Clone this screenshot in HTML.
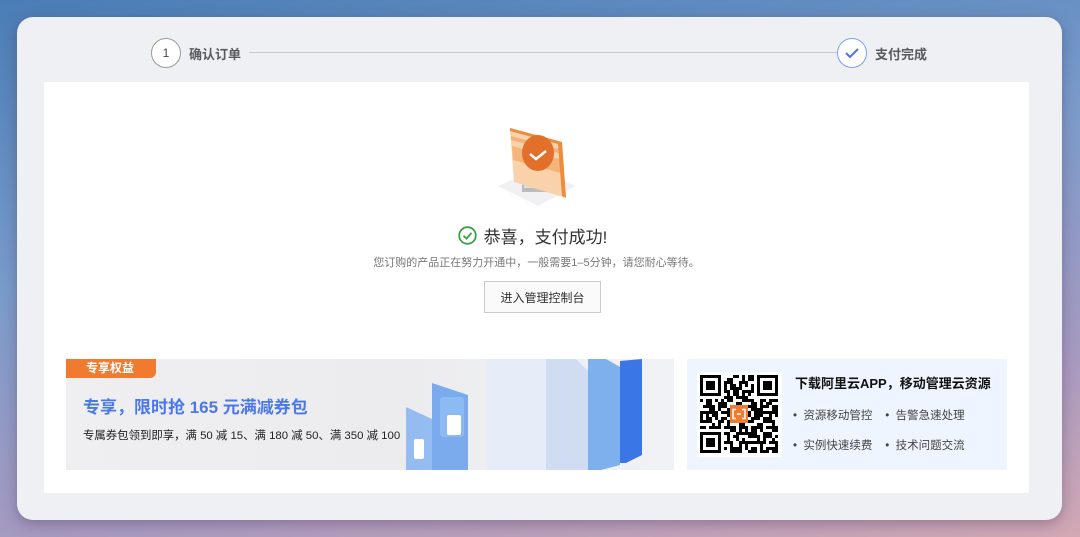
<!DOCTYPE html>
<html><head><meta charset="utf-8"><style>
*{margin:0;padding:0;box-sizing:border-box}
body{width:1080px;height:537px;overflow:hidden;font-family:"Liberation Sans","Noto Sans CJK SC",sans-serif;background:linear-gradient(170deg,#4a7db6 0%,#7a9bcb 40%,#a79ac0 75%,#d2a8b4 100%);position:relative}
.win{position:absolute;left:17px;top:17px;width:1045px;height:503px;background:#eff0f4;border-radius:16px;box-shadow:0 4px 14px rgba(60,40,80,.35)}
.main{position:absolute;left:27px;top:65px;width:985px;height:411px;background:#fff}
.step{position:absolute;top:21px;height:30px;display:flex;align-items:center;font-size:13px;font-weight:bold;color:#5a5a5a}
.circ{width:30px;height:30px;border-radius:50%;border:1px solid #999;background:#fff;display:flex;align-items:center;justify-content:center;font-size:12px;font-weight:normal;color:#444;margin-right:8px}
.line{position:absolute;left:232px;top:35px;width:588px;height:1px;background:#c8c8cc}
.t{position:absolute;text-align:center;width:100%}
.btn{position:absolute;left:440px;top:199px;width:117px;height:32px;border:1px solid #ccc;background:#fafafa;font-size:12px;color:#333;display:flex;align-items:center;justify-content:center}
.ban{position:absolute;left:22px;top:277px;width:608px;height:111px;background:linear-gradient(90deg,#efeff1 0%,#ececee 55%,#f1f2f6 100%);overflow:hidden}
.tag{position:absolute;left:0;top:0;width:90px;height:19px;background:#ef7a30;color:#fff;font-size:12px;font-weight:bold;padding-left:20px;line-height:19px;border-bottom-right-radius:6px}
.app{position:absolute;left:643px;top:277px;width:320px;height:111px;background:#eff5fe}
.li{position:absolute;font-size:11.5px;color:#444}
</style></head><body>
<div class="win">
 <div class="line"></div>
 <div class="step" style="left:134px"><div class="circ">1</div>确认订单</div>
 <div class="step" style="left:820px"><div class="circ" style="border-color:#7f9ef5;border-width:1.5px"><svg width="16" height="12" viewBox="0 0 16 12"><path d="M2 6 L6 10 L14 2" fill="none" stroke="#4f72e8" stroke-width="2"/></svg></div>支付完成</div>
 <div class="main">
  <svg style="position:absolute;left:450px;top:42px" width="85" height="88" viewBox="0 0 85 88">
   <path d="M4 62 L40 46 L82 62 L44 82Z" fill="#f1f1f3"/>
   <rect x="28" y="54" width="26" height="14" fill="#bbb"/><rect x="30" y="57" width="22" height="7" fill="#ddd"/>
   <path d="M16 4 L68 18 L72 74 L20 58Z" fill="#f9d2ac"/>
   <path d="M17 12 L68 26 L68 30 L17 16Z" fill="#f3b27a"/>
   <path d="M18 22 L69 36 L70 50 L19 36Z" fill="#f5b57a"/>
   <path d="M16 4 L68 18 L72 74 L68 72 L64 20 L16 7Z" fill="#ec8c3c"/>
   <ellipse cx="44" cy="29" rx="16" ry="18" fill="#e2702b"/>
   <path d="M36 30 L42 35 L52 27" fill="none" stroke="#fff" stroke-width="2.5"/>
  </svg>
  <div class="t" style="top:141px;font-size:17px;color:#333;padding-left:18px"><svg style="position:absolute;left:414px;top:3px" width="19" height="19" viewBox="0 0 19 19"><circle cx="9.5" cy="9.5" r="8.3" fill="none" stroke="#3aa04a" stroke-width="1.8"/><path d="M5.5 9.8 L8.5 12.6 L13.5 6.8" fill="none" stroke="#3aa04a" stroke-width="1.8"/></svg>恭喜，支付成功!</div>
  <div class="t" style="top:172px;font-size:11px;color:#777">您订购的产品正在努力开通中，一般需要1–5分钟，请您耐心等待。</div>
  <div class="btn">进入管理控制台</div>
  <div class="ban">
   <svg style="position:absolute;left:330px;top:0" width="278" height="111" viewBox="0 0 278 111">
    <path d="M90 0 L170 0 L170 111 L90 111Z" fill="#e6edf9"/>
    <path d="M150 0 L180 0 L200 20 L200 111 L150 111Z" fill="#cfdcf1"/>
    <path d="M192 0 L210 0 L224 8 L224 106 L205 111 L192 111Z" fill="#7fb0ee"/>
    <path d="M224 2 L246 0 L246 96 L230 104 L224 104Z" fill="#3b76e6"/>
    <path d="M10 48 L36 60 L36 111 L10 111Z" fill="#8bb7f1" opacity=".9"/>
    <path d="M36 24 L72 36 L72 111 L36 111Z" fill="#6ea2ec" opacity=".9"/>
    <rect x="44" y="38" width="24" height="40" rx="3" fill="#8cbaf3"/>
    <rect x="51" y="56" width="14" height="20" rx="2" fill="#fff"/>
    <rect x="18" y="80" width="10" height="20" rx="2" fill="#fff"/>
   </svg>
   <div class="tag">专享权益</div>
   <div style="position:absolute;left:17px;top:34px;font-size:17px;font-weight:bold;color:#4a78e8">专享，限时抢 165 元满减券包</div>
   <div style="position:absolute;left:17px;top:68px;font-size:11.4px;color:#222">专属券包领到即享，满 50 减 15、满 180 减 50、满 350 减 100</div>
  </div>
  <div class="app">
   <div style="position:absolute;left:10px;top:13px;width:85px;height:85px;background:#fff"></div>
   <svg style="position:absolute;left:13px;top:16px" width="78" height="78" viewBox="0 0 26 26">
    <defs><pattern id="p" width="7" height="7" patternUnits="userSpaceOnUse">
     <rect x="0" y="0" width="1" height="2"/><rect x="2" y="1" width="2" height="1"/><rect x="5" y="0" width="1" height="1"/><rect x="1" y="3" width="1" height="1"/><rect x="3" y="3" width="2" height="2"/><rect x="6" y="2" width="1" height="3"/><rect x="0" y="5" width="2" height="1"/><rect x="4" y="6" width="2" height="1"/><rect x="2" y="5" width="1" height="2"/>
    </pattern><pattern id="q" width="5" height="5" patternUnits="userSpaceOnUse"><rect x="1" y="0" width="2" height="1"/><rect x="0" y="2" width="1" height="2"/><rect x="3" y="2" width="1" height="1"/><rect x="2" y="4" width="2" height="1"/><rect x="4" y="1" width="1" height="2"/></pattern></defs>
    <rect width="26" height="26" fill="url(#p)"/><rect width="26" height="26" fill="url(#q)"/>
    <g><rect x="0" y="0" width="8" height="8" fill="#fff"/><rect x="0.5" y="0.5" width="6" height="6" fill="none" stroke="#000"/><rect x="2" y="2" width="3" height="3"/></g>
    <g transform="translate(18 0)"><rect x="0" y="0" width="8" height="8" fill="#fff"/><rect x="1.5" y="0.5" width="6" height="6" fill="none" stroke="#000"/><rect x="3" y="2" width="3" height="3"/></g>
    <g transform="translate(0 18)"><rect x="0" y="0" width="8" height="8" fill="#fff"/><rect x="0.5" y="1.5" width="6" height="6" fill="none" stroke="#000"/><rect x="2" y="3" width="3" height="3"/></g>
    <rect x="10" y="10" width="6" height="6" fill="#ef7a30"/>
    <path d="M12 11.5 h-1 v3 h1 M14 11.5 h1 v3 h-1 M12.3 13 h1.4" fill="none" stroke="#fff" stroke-width=".5"/>
   </svg>
   <div style="position:absolute;left:108px;top:14px;font-size:13px;font-weight:bold;color:#111">下载阿里云APP，移动管理云资源</div>
   <div class="li" style="left:106px;top:48px">•&nbsp; 资源移动管控&nbsp;&nbsp;&nbsp; •&nbsp; 告警急速处理</div>
   <div class="li" style="left:106px;top:78px">•&nbsp; 实例快速续费&nbsp;&nbsp;&nbsp; •&nbsp; 技术问题交流</div>
  </div>
 </div>
</div>
</body></html>
